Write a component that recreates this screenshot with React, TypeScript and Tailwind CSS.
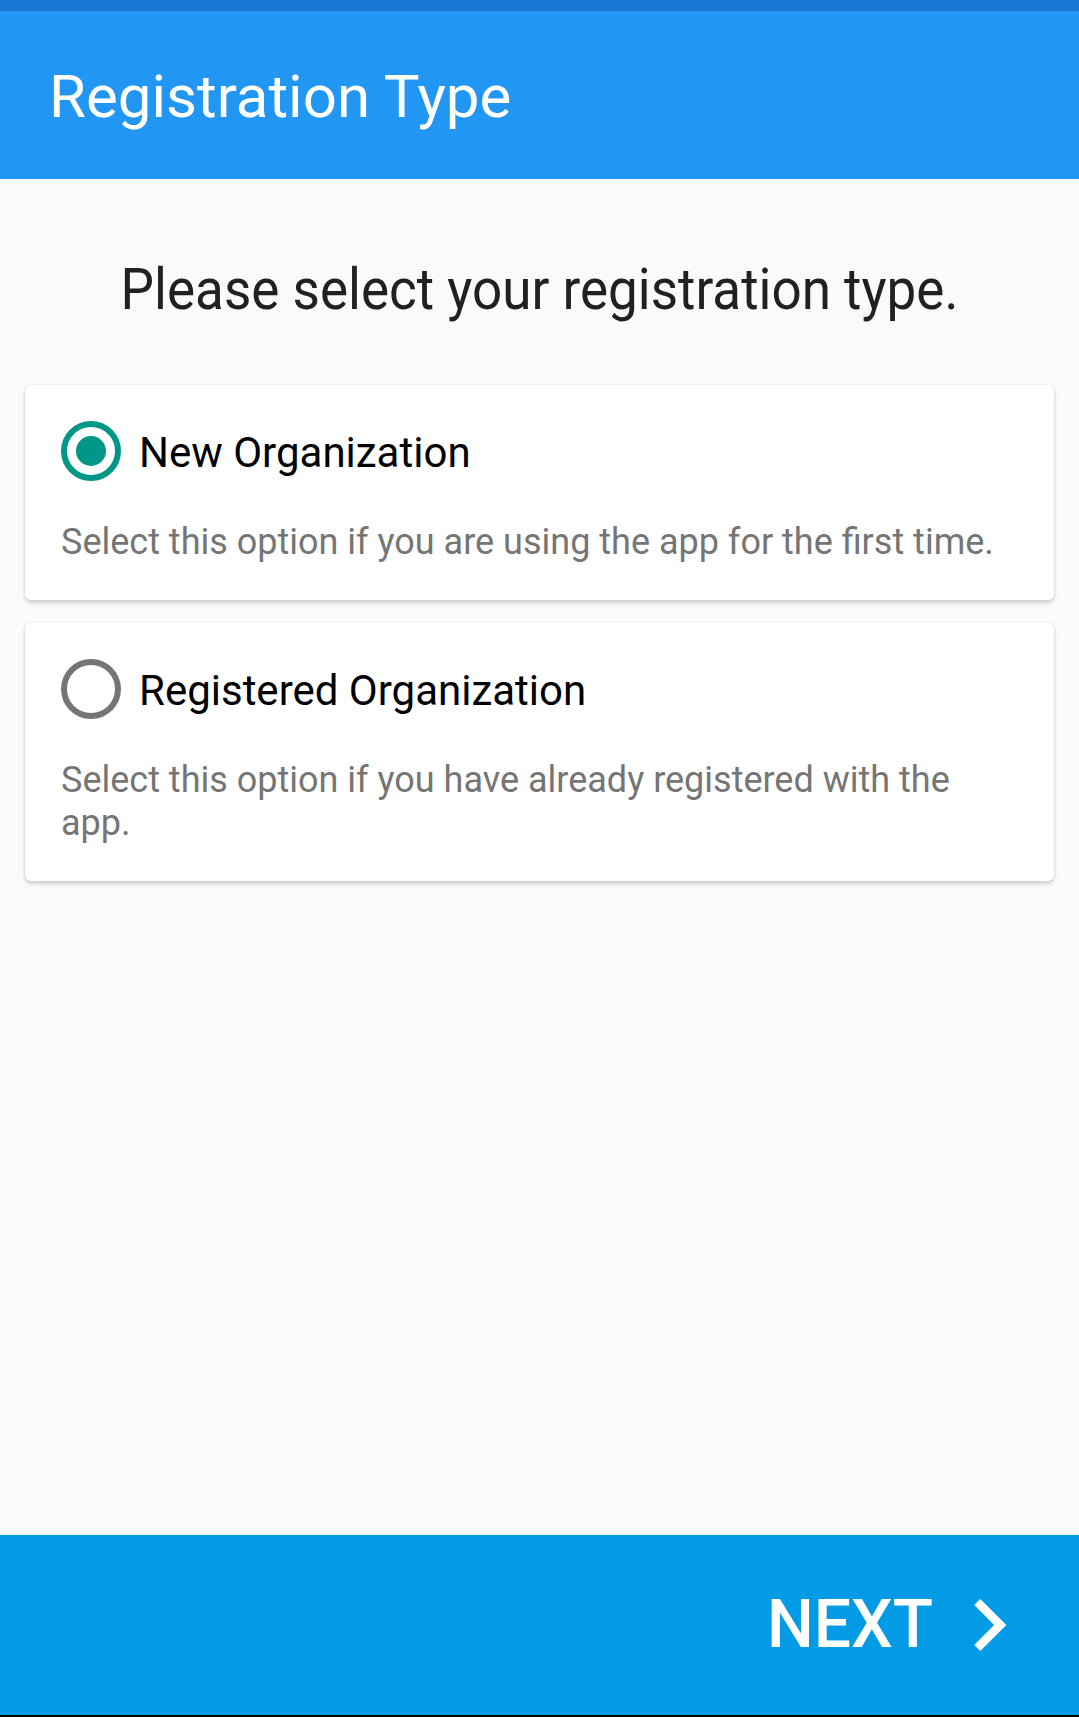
import React, { useState } from 'react';

const options = [
  {
    id: 'new',
    title: 'New Organization',
    desc: 'Select this option if you are using the app for the first time.',
  },
  {
    id: 'registered',
    title: 'Registered Organization',
    desc: 'Select this option if you have already registered with the app.',
  },
];

const Radio: React.FC<{ checked: boolean }> = ({ checked }) => (
  <div
    className={`w-[60px] h-[60px] rounded-full border-[6px] flex items-center justify-center shrink-0 ${
      checked ? 'border-[#009688]' : 'border-[#757575]'
    }`}
  >
    {checked && <div className="w-[30px] h-[30px] rounded-full bg-[#009688]" />}
  </div>
);

export default function App() {
  const [selected, setSelected] = useState('new');

  return (
    <div className="h-[1717px] flex flex-col bg-[#fafafa] font-['Roboto',sans-serif]">
      {/* status bar strip */}
      <div className="h-[11px] bg-[#1976d2]" />

      <header className="h-[168px] bg-[#2196f3] flex items-center pl-[49px] pt-1">
        <h1 className="text-white text-[60px] font-normal">Registration Type</h1>
      </header>

      <main className="flex-1 px-[25px]">
        {/* condensed face isn't installed, so squeeze Roboto */}
        <h2 className="mt-[81px] mb-[67px] text-center text-[58px] leading-none text-[#212121] scale-x-[0.914]">
          Please select your registration type.
        </h2>

        <div className="flex flex-col gap-[23px]">
          {options.map((o) => (
            <div
              key={o.id}
              onClick={() => setSelected(o.id)}
              className="bg-white rounded-[6px] p-9 shadow-[0_3px_4px_rgba(0,0,0,0.16),0_0_3px_rgba(0,0,0,0.08)] cursor-pointer"
            >
              <div className="flex items-center gap-[18px] h-[60px]">
                <Radio checked={selected === o.id} />
                <span className="text-[42px] h-[60px] leading-[64px] text-black">{o.title}</span>
              </div>
              <p className="mt-[40px] text-[36px] leading-[43px] text-[#757575]">{o.desc}</p>
            </div>
          ))}
        </div>
      </main>

      <footer className="h-[180px] bg-[#039be5] flex items-center justify-end pr-[38px]">
        <button className="flex items-center text-white">
          <span className="text-[66px] font-medium leading-none">NEXT</span>
          <svg viewBox="0 0 24 24" className="w-[104px] h-[104px] ml-1" fill="currentColor">
            <path d="M10 6L8.59 7.41 13.17 12l-4.58 4.59L10 18l6-6z" />
          </svg>
        </button>
      </footer>
      <div className="h-[2px] bg-black" />
    </div>
  );
}
